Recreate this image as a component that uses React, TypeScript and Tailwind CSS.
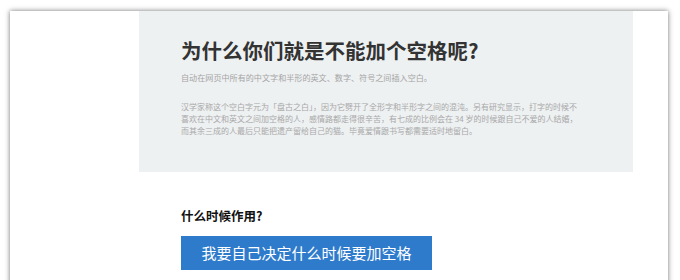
export default function App() {
  return (
    <div className="w-[680px] h-[280px] overflow-hidden bg-white pt-[11px] pl-[10px] font-['Noto_Sans_CJK_SC',sans-serif]">
      <div className="w-[658px] h-[300px] bg-white shadow-[0_0_5px_rgba(0,0,0,0.55)]">
        <div className="ml-[129px] w-[494px] h-[161px] bg-[#eef1f2] px-[42px] pt-[24px]">
          <h1 className="text-[20.5px] leading-[31px] font-bold text-[#333]">为什么你们就是不能加个空格呢?</h1>
          <p className="mt-[6px] text-[8.1px] leading-[12px] text-[#a4a4a4]">自动在网页中所有的中文字和半形的英文、数字、符号之间插入空白。</p>
          <p className="mt-[17px] text-[8px] leading-[12px] text-[#a8a8a8] text-justify">
            汉学家称这个空白字元为「盘古之白」，因为它劈开了全形字和半形字之间的混沌。另有研究显示，打字的时候不
            <br />
            喜欢在中文和英文之间加空格的人，感情路都走得很辛苦，有七成的比例会在 34 岁的时候跟自己不爱的人结婚，
            <br />
            而其余三成的人最后只能把遗产留给自己的猫。毕竟爱情跟书写都需要适时地留白。
          </p>
        </div>
        <div className="pl-[171px] pt-[35px]">
          <h2 className="text-[12.5px] leading-[18px] font-bold text-[#111]">什么时候作用?</h2>
          <button className="mt-[11px] h-[34px] w-[251px] bg-[#2f7bcb] text-white text-[15px] leading-[34px] text-center">
            我要自己决定什么时候要加空格
          </button>
        </div>
      </div>
    </div>
  );
}
